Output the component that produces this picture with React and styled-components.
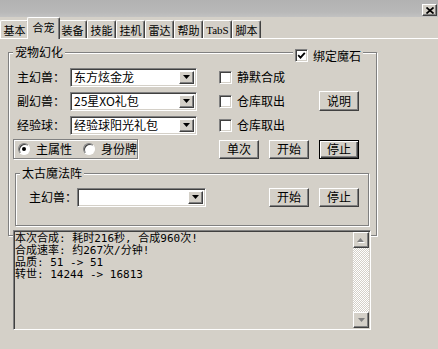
import styled, { createGlobalStyle, css } from "styled-components";

const GlobalStyle = createGlobalStyle`
  * { box-sizing: border-box; }
  html, body { margin: 0; padding: 0; background: #d4d0c8; }
  body {
    font-family: "Noto Sans CJK SC", "DejaVu Sans", sans-serif;
    font-size: 12px;
    color: #000;
  }
`;

const raised = css`
  border: 1px solid;
  border-color: #ffffff #404040 #404040 #ffffff;
  box-shadow: inset -1px -1px 0 #808080;
`;

const sunken = css`
  border: 1px solid;
  border-color: #808080 #ffffff #ffffff #808080;
  box-shadow: inset 1px 1px 0 #404040, inset -1px -1px 0 #d4d0c8;
`;

const etched = css`
  border: 1px solid #808080;
  box-shadow: inset 1px 1px 0 #ffffff, 1px 1px 0 #ffffff;
`;

const tabs = ["基本", "合宠", "装备", "技能", "挂机", "雷达", "帮助", "TabS", "脚本"];

const logLines = [
  "本次合成: 耗时216秒, 合成960次!",
  "合成速率: 约267次/分钟!",
  "品质: 51 -> 51",
  "转世: 14244 -> 16813",
];

function DownArrow({ color = "#000" }) {
  return (
    <svg width="7" height="4" viewBox="0 0 7 4">
      <polygon points="0,0 7,0 3.5,4" fill={color} />
    </svg>
  );
}

function UpArrow({ color = "#808080" }) {
  return (
    <svg width="8" height="5" viewBox="0 0 8 5">
      <polygon points="1,5 8,5 4.5,1" fill="#fff" />
      <polygon points="0,4 7,4 3.5,0" fill={color} />
    </svg>
  );
}

function ComboBox({ width, value }) {
  return (
    <Combo $w={width}>
      <ComboText>{value}</ComboText>
      <ComboButton>
        <DownArrow />
      </ComboButton>
    </Combo>
  );
}

function Check({ label, checked }) {
  return (
    <CheckLabel>
      <CheckBox>
        {checked && (
          <svg width="9" height="9" viewBox="0 0 9 9">
            <path d="M1.2 4.2 L3.5 6.6 L7.8 1.8" fill="none" stroke="#000" strokeWidth="1.8" />
          </svg>
        )}
      </CheckBox>
      {label}
    </CheckLabel>
  );
}

export default function App() {
  return (
    <>
      <GlobalStyle />
      <Window>
        <TitleBar>
          <CloseButton>
            <svg width="8" height="7" viewBox="0 0 8 7">
              <path d="M0.5 0.5 L7.5 6.5 M7.5 0.5 L0.5 6.5" stroke="#000" strokeWidth="1.7" />
            </svg>
          </CloseButton>
        </TitleBar>

        <TabStrip>
          {tabs.map((t) => (
            <Tab key={t} $active={t === "合宠"} $latin={t === "TabS"}>
              {t}
            </Tab>
          ))}
        </TabStrip>

        <Panel>
          <Group>
            <Legend>宠物幻化</Legend>
            <CornerCheck>
              <Check label="绑定魔石" checked />
            </CornerCheck>

            <MainGrid>
              <FieldRow>
                <FieldLabel $w={57}>主幻兽：</FieldLabel>
                <ComboBox width={127} value="东方炫金龙" />
              </FieldRow>
              <Check label="静默合成" />
              <span />

              <FieldRow>
                <FieldLabel $w={57}>副幻兽：</FieldLabel>
                <ComboBox width={127} value="25星XO礼包" />
              </FieldRow>
              <Check label="仓库取出" />
              <Button $h={20}>说明</Button>

              <FieldRow>
                <FieldLabel $w={57}>经验球：</FieldLabel>
                <ComboBox width={127} value="经验球阳光礼包" />
              </FieldRow>
              <Check label="仓库取出" />
              <span />

              <RadioBox>
                <RadioLabel>
                  <RadioDot $on />
                  主属性
                </RadioLabel>
                <RadioLabel>
                  <RadioDot />
                  身份牌
                </RadioLabel>
              </RadioBox>
              <ButtonPair>
                <Button>单次</Button>
                <Button>开始</Button>
              </ButtonPair>
              <Button $default>停止</Button>
            </MainGrid>

            <SubGroup>
              <Legend>太古魔法阵</Legend>
              <SubRow>
                <FieldLabel $w={52}>主幻兽：</FieldLabel>
                <ComboBox width={129} value="" />
                <ButtonPair $push>
                  <Button>开始</Button>
                  <Button>停止</Button>
                </ButtonPair>
              </SubRow>
            </SubGroup>
          </Group>

          <LogBox>
            <LogText>
              {logLines.map((l) => (
                <div key={l}>{l}</div>
              ))}
            </LogText>
            <ScrollBar>
              <ScrollButton>
                <UpArrow />
              </ScrollButton>
              <ScrollTrack />
              <ScrollButton>
                <DownArrow color="#808080" />
              </ScrollButton>
            </ScrollBar>
          </LogBox>
        </Panel>
      </Window>
    </>
  );
}

const Window = styled.div`
  width: 438px;
  height: 349px;
  overflow: hidden;
  background: #d4d0c8;
  display: flex;
  flex-direction: column;
`;

const TitleBar = styled.div`
  height: 17px;
  flex-shrink: 0;
  background: linear-gradient(#b2b2b2, #b8b8b8 70%, #c2c2c2);
  display: flex;
  justify-content: flex-end;
  align-items: flex-start;
  padding: 4px 1px 0 0;
`;

const CloseButton = styled.div`
  ${raised};
  width: 15px;
  height: 12px;
  background: #d4d0c8;
  display: flex;
  align-items: center;
  justify-content: center;
`;

const TabStrip = styled.div`
  height: 22px;
  flex-shrink: 0;
  display: flex;
  align-items: flex-end;
  border-bottom: 1px solid #ffffff;
`;

const Tab = styled.div`
  width: 29px;
  height: 18px;
  flex-shrink: 0;
  display: flex;
  align-items: center;
  justify-content: center;
  background: #d4d0c8;
  border-top: 1px solid #ffffff;
  border-left: 1px solid #ffffff;
  border-right: 1px solid #404040;
  border-radius: 2px 2px 0 0;
  box-shadow: inset -1px 0 0 #808080;
  font-size: 11px;
  line-height: 12px;
  white-space: nowrap;
  overflow: hidden;
  font-family: ${(p) => (p.$latin ? '"Liberation Serif", serif' : "inherit")};
  ${(p) =>
    p.$active &&
    css`
      position: relative;
      z-index: 1;
      width: 33px;
      height: 22px;
      margin: 0 -2px -1px;
      padding-bottom: 3px;
    `}
`;

const Panel = styled.div`
  flex: 1;
  padding: 13px 0 0 8px;
`;

const Group = styled.div`
  ${etched};
  position: relative;
  width: 369px;
  height: 184px;
  padding: 14px 0 0 4px;
`;

const Legend = styled.div`
  position: absolute;
  top: -8px;
  left: 4px;
  padding: 0 2px;
  background: #d4d0c8;
  font-size: 12px;
  line-height: 14px;
`;

const CornerCheck = styled.div`
  position: absolute;
  top: -7px;
  left: 284px;
  padding: 0 2px;
  background: #d4d0c8;
`;

const CheckLabel = styled.label`
  display: inline-flex;
  align-items: center;
  gap: 5px;
  font-size: 12px;
  line-height: 14px;
  white-space: nowrap;
`;

const CheckBox = styled.span`
  ${sunken};
  width: 13px;
  height: 13px;
  background: #ffffff;
  display: flex;
  align-items: center;
  justify-content: center;
`;

const MainGrid = styled.div`
  display: grid;
  grid-template-columns: 206px 100px 40px;
  grid-auto-rows: 20px;
  row-gap: 4px;
  align-items: center;
`;

const FieldRow = styled.div`
  display: flex;
  align-items: center;
`;

const FieldLabel = styled.span`
  width: ${(p) => p.$w}px;
  padding-left: 4px;
  font-size: 12px;
  line-height: 14px;
  white-space: nowrap;
`;

const Combo = styled.div`
  ${sunken};
  width: ${(p) => p.$w}px;
  height: 19px;
  padding: 2px;
  background: #ffffff;
  display: flex;
`;

const ComboText = styled.div`
  flex: 1;
  min-width: 0;
  display: flex;
  align-items: center;
  padding-left: 1px;
  font-size: 12px;
  line-height: 12px;
  white-space: nowrap;
`;

const ComboButton = styled.div`
  ${raised};
  width: 15px;
  flex-shrink: 0;
  background: #d4d0c8;
  display: flex;
  align-items: center;
  justify-content: center;
`;

const Button = styled.div`
  ${raised};
  width: 40px;
  height: ${(p) => p.$h || 19}px;
  background: #d4d0c8;
  display: flex;
  align-items: center;
  justify-content: center;
  font-size: 12px;
  line-height: 14px;
  ${(p) =>
    p.$default &&
    css`
      border: 1px solid #000000;
      box-shadow: inset 1px 1px 0 #ffffff, inset -1px -1px 0 #404040,
        inset -2px -2px 0 #808080;
    `}
`;

const ButtonPair = styled.div`
  display: flex;
  gap: 10px;
  ${(p) =>
    p.$push &&
    css`
      margin-left: auto;
    `}
`;

const RadioBox = styled.div`
  ${etched};
  width: 125px;
  height: 20px;
  display: flex;
  align-items: center;
  gap: 11px;
  padding-left: 4px;
`;

const RadioLabel = styled.label`
  display: inline-flex;
  align-items: center;
  gap: 6px;
  font-size: 12px;
  line-height: 14px;
  white-space: nowrap;
`;

const RadioDot = styled.span`
  width: 12px;
  height: 12px;
  border-radius: 50%;
  background: #ffffff;
  border: 1px solid;
  border-color: #808080 #ffffff #ffffff #808080;
  box-shadow: inset 1px 1px 0 #404040;
  display: flex;
  align-items: center;
  justify-content: center;
  &::after {
    content: "";
    width: 4px;
    height: 4px;
    border-radius: 50%;
    background: ${(p) => (p.$on ? "#000000" : "transparent")};
  }
`;

const SubGroup = styled.div`
  ${etched};
  position: relative;
  width: 354px;
  height: 53px;
  margin: 14px 0 0 2px;
  padding: 13px 9px 0 9px;
`;

const SubRow = styled.div`
  display: flex;
  align-items: center;
  height: 20px;
`;

const LogBox = styled.div`
  ${sunken};
  position: relative;
  width: 358px;
  height: 100px;
  margin: -6px 0 0 5px;
  padding: 1px;
  background: #d4d0c8;
  display: flex;
`;

const LogText = styled.div`
  flex: 1;
  padding-top: 1px;
  font-family: "DejaVu Sans Mono", "Noto Sans CJK SC", monospace;
  font-size: 11px;
  line-height: 12px;
  white-space: pre;
`;

const ScrollBar = styled.div`
  width: 16px;
  display: flex;
  flex-direction: column;
`;

const ScrollButton = styled.div`
  ${raised};
  width: 16px;
  height: 16px;
  background: #d4d0c8;
  display: flex;
  align-items: center;
  justify-content: center;
`;

const ScrollTrack = styled.div`
  flex: 1;
  background: repeating-conic-gradient(#ffffff 0 25%, #d4d0c8 0 50%) 0 0 / 2px 2px;
`;
